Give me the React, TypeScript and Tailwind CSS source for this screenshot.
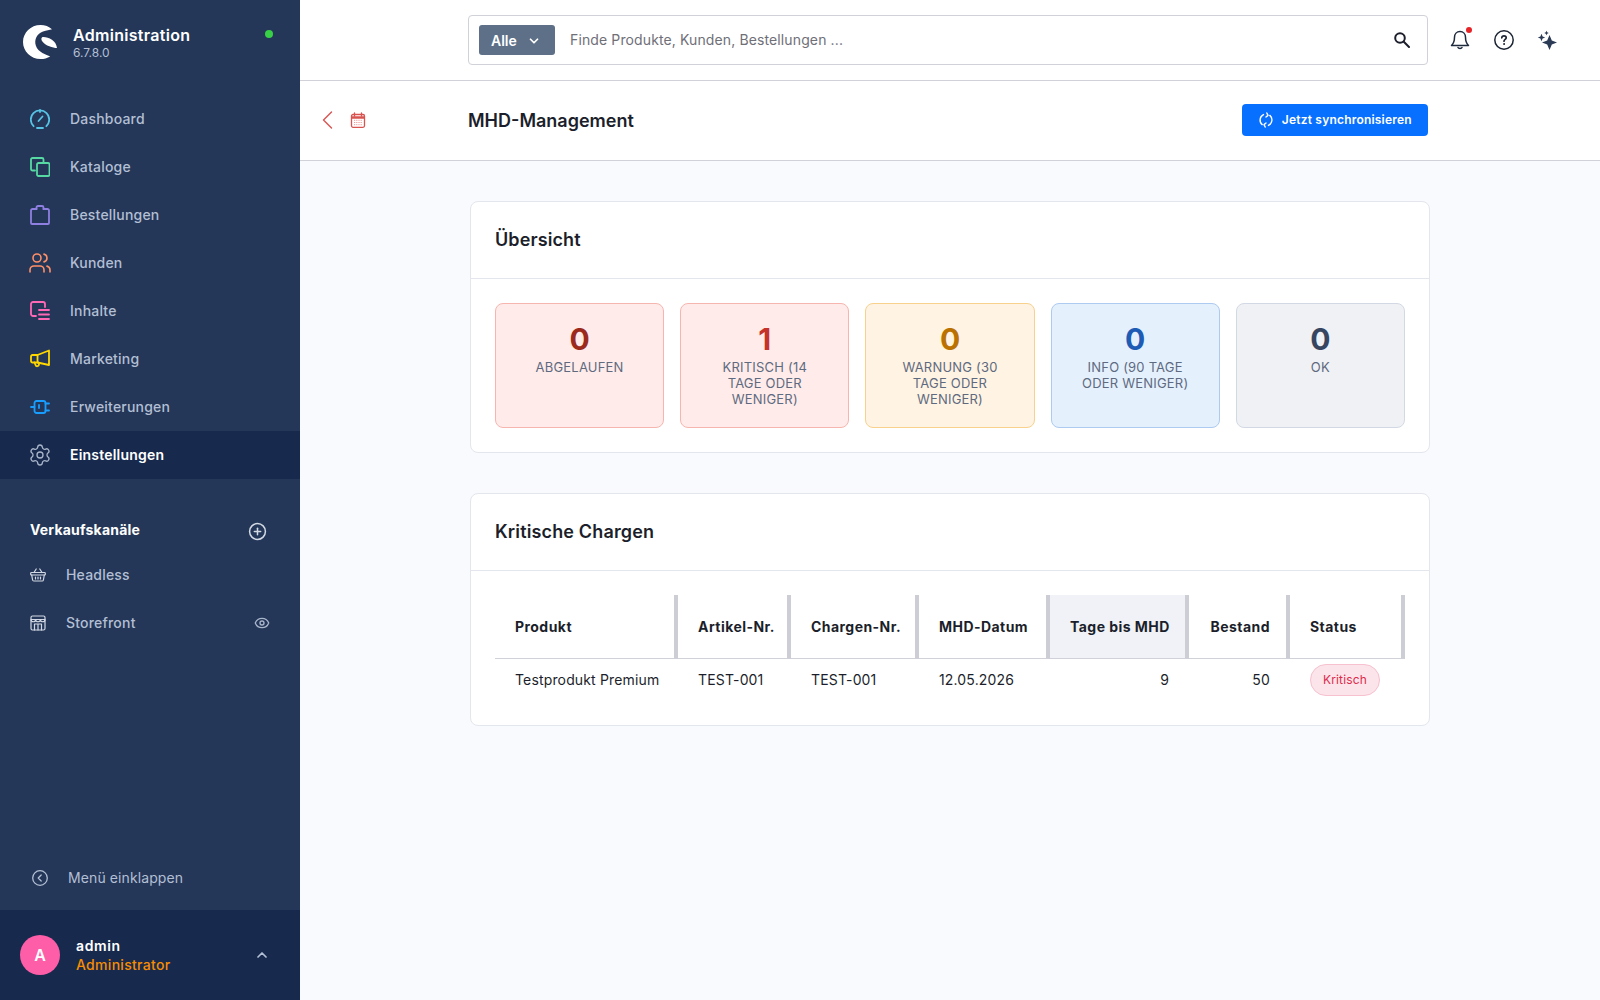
import React from 'react';
import { Settings, ChevronUp, ChevronDown, CirclePlus, Eye, Users } from 'lucide-react';

function Logo() {
  return (
    <svg width="34" height="34" viewBox="0 0 34 34" fill="#fff" className="shrink-0">
      <path d="M29 4.200C26 1.600 22 0 17.500 0 7.800 0 0 7.600 0 17c0 9.400 7.800 17 17.500 17 3.500 0 6.900-1 9.700-2.600C23.500 29.800 15 27.500 12.800 20.500 11 14.500 14 8.500 20 6.500c3.500-1.100 6.500-1.500 9-2.300z" />
      <path d="M19.500 12C25 11.600 33 15 34 23c-4-.1-11.500-2-15-7-1-1.600-.8-3.400.5-4z" />
    </svg>
  );
}

const s = { fill: 'none', strokeWidth: 1.8, strokeLinecap: 'round' as const, strokeLinejoin: 'round' as const };

function IconDashboard() {
  return (
    <svg width="20" height="20" viewBox="0 0 20 20" {...s} stroke="#57c4e5">
      <path d="M3.600 17.200A9.200 9.200 0 1 1 16.400 17.200" />
      <path d="M7 19h6" />
      <path d="M10 1v2M8.500 12l4-4.500" />
    </svg>
  );
}
function IconCatalog() {
  return (
    <svg width="20" height="20" viewBox="0 0 20 20" {...s} stroke="#57d9a3">
      <path d="M5 13.500H2.500A1.500 1.500 0 0 1 1 12V2.500A1.500 1.500 0 0 1 2.500 1H12a1.500 1.500 0 0 1 1.500 1.500V6" />
      <rect x="7" y="6" width="12.500" height="13" rx="1.500" />
    </svg>
  );
}
function IconOrders() {
  return (
    <svg width="20" height="20" viewBox="0 0 20 20" {...s} stroke="#8f7fe0">
      <path d="M6.500 4H2.500A1.500 1.500 0 0 0 1 5.500V18a1 1 0 0 0 1 1h16a1 1 0 0 0 1-1V5.500A1.500 1.500 0 0 0 17.500 4H13.500" />
      <path d="M6.500 4V2.500A1.500 1.500 0 0 1 8 1h4a1.500 1.500 0 0 1 1.500 1.500V4" />
    </svg>
  );
}
function IconContent() {
  return (
    <svg width="20" height="20" viewBox="0 0 20 20" {...s} stroke="#ff68b4">
      <path d="M6 15H3a2 2 0 0 1-2-2V3a2 2 0 0 1 2-2h10a2 2 0 0 1 2 2v3" />
      <path d="M9 9h10M9 13.500h10M9 18h10" />
    </svg>
  );
}
function IconMarketing() {
  return (
    <svg width="20" height="20" viewBox="0 0 20 20" {...s} stroke="#ffd700">
      <path d="M7.500 6 19 1.500v14.500L7.500 13.500H2.500A1.500 1.500 0 0 1 1 12V7.500A1.500 1.500 0 0 1 2.500 6z" />
      <path d="M7.500 6v7.500M4.500 13.500l1 2.500a1.800 1.800 0 0 0 3.500-.5l-.3-1.800" />
    </svg>
  );
}
function IconExtensions() {
  return (
    <svg width="20" height="20" viewBox="0 0 20 20" {...s} stroke="#189eff">
      <path d="M1 10h3.500" />
      <rect x="4.500" y="4" width="11" height="12" rx="2" />
      <path d="M15.500 6.500H19M15.500 13.500H19M9 8v3" />
    </svg>
  );
}
function IconBasket() {
  return (
    <svg width="16" height="14" viewBox="0 0 16 14" fill="none" stroke="#d3d9e4" strokeWidth="1.200" strokeLinecap="round" strokeLinejoin="round">
      <path d="M1.500 4.500h13a.800.800 0 0 1 .800.800v.900a.800.800 0 0 1-.800.800h-13a.800.800 0 0 1-.800-.800v-.900a.800.800 0 0 1 .800-.800z" />
      <path d="M1.700 7l.900 5a1.200 1.200 0 0 0 1.200 1h8.400a1.200 1.200 0 0 0 1.200-1l.900-5" />
      <path d="M4 4.500 6.200 1M12 4.500 9.800 1M5.500 9v2M8 9v2M10.500 9v2" />
    </svg>
  );
}
function IconStore() {
  return (
    <svg width="16" height="16" viewBox="0 0 16 16" fill="none" stroke="#d3d9e4" strokeWidth="1.200" strokeLinecap="round" strokeLinejoin="round">
      <rect x="1" y="1" width="14" height="14" rx="1.500" />
      <path d="M1 4.500h14M1 4.500c0 3 4.600 3 4.600 0 0 3 4.800 3 4.800 0 0 3 4.600 3 4.600 0" />
      <path d="M4.500 15V9h7v6M8 9v6" />
    </svg>
  );
}
function IconCollapse() {
  return (
    <svg width="16" height="16" viewBox="0 0 16 16" fill="none" stroke="#b3bfd4" strokeWidth="1.300" strokeLinecap="round" strokeLinejoin="round">
      <circle cx="8" cy="8" r="7.300" />
      <path d="M9.200 5 6.200 8l3 3" />
    </svg>
  );
}
function IconRefresh() {
  return (
    <svg width="16" height="16" viewBox="0 0 16 16" fill="none" stroke="#fff" strokeWidth="1.400" strokeLinecap="round" strokeLinejoin="round">
      <path d="M5.500 2.600A6 6 0 0 0 4.200 12.600" />
      <path d="M10.500 13.400A6 6 0 0 0 11.800 3.400" />
      <path d="M8.800 1 10 3.400 8 5M7.200 15 6 12.600 8 11" />
    </svg>
  );
}
function IconCalendar() {
  return (
    <svg width="16" height="16" viewBox="0 0 16 16" fill="none">
      <rect x="1.500" y="2.500" width="13" height="12.800" rx="1.500" stroke="#d9534f" strokeWidth="1.300" />
      <path d="M1.500 5.500h13" stroke="#d9534f" strokeWidth="2.500" />
      <path d="M4.500 1v3M11.500 1v3" stroke="#d9534f" strokeWidth="1.300" strokeLinecap="round" />
      <path d="M4 8.300h8M4 10.500h8M4 12.700h8" stroke="#ee9c98" strokeWidth="1" strokeDasharray="1.200 1" />
    </svg>
  );
}
function IconBack() {
  return (
    <svg width="11" height="18" viewBox="0 0 11 18" fill="none" stroke="#d9534f" strokeWidth="1.400" strokeLinecap="round" strokeLinejoin="round">
      <path d="M9.500 1 1.500 9l8 8" />
    </svg>
  );
}
function IconSearch() {
  return (
    <svg width="16" height="16" viewBox="0 0 16 16" fill="none" stroke="#1c1f2b" strokeWidth="2" strokeLinecap="round">
      <circle cx="6" cy="6" r="4.800" />
      <path d="M9.800 9.800 15 15" />
    </svg>
  );
}
function IconBell() {
  return (
    <svg width="20" height="20" viewBox="0 0 20 20" fill="none" stroke="#1f2a3d" strokeWidth="1.500" strokeLinecap="round" strokeLinejoin="round">
      <path d="M10 1.500c-3.300 0-5.500 2.500-5.500 5.800 0 4.700-1 6.300-3 8.200h17c-2-1.900-3-3.500-3-8.200 0-3.300-2.200-5.800-5.500-5.800z" />
      <path d="M8 17.500c.5 1.300 3.500 1.300 4 0" />
    </svg>
  );
}
function IconHelp() {
  return (
    <svg width="20" height="20" viewBox="0 0 20 20" fill="none" stroke="#1c2433" strokeWidth="1.500" strokeLinecap="round" strokeLinejoin="round">
      <circle cx="10" cy="10" r="9.200" />
      <path d="M7.800 7.800C7.900 6.500 8.900 5.800 10 5.800c1.200 0 2.200.8 2.200 2 0 1.500-2.200 1.800-2.200 3.400" strokeWidth="1.700" />
      <circle cx="10" cy="14" r=".5" fill="#1c2433" strokeWidth="1" />
    </svg>
  );
}
function IconSparkles() {
  return (
    <svg width="20" height="20" viewBox="0 0 20 20" fill="#2b3a55">
      <path d="M12.500 5 14.800 10.600 20 12.600 14.800 14.600 12.500 20 10.200 14.600 5 12.600 10.200 10.600z" />
      <path d="M4.500 3.800 5.600 6.400 8.200 7.500 5.600 8.600 4.500 11.200 3.400 8.600 .8 7.500 3.400 6.400z" />
      <path d="M9.500 .8 10.200 2.300 11.700 3 10.200 3.700 9.500 5.200 8.800 3.700 7.300 3 8.800 2.300z" />
    </svg>
  );
}

const nav: { label: string; icon: React.ReactNode; active?: boolean }[] = [
  { label: 'Dashboard', icon: <IconDashboard /> },
  { label: 'Kataloge', icon: <IconCatalog /> },
  { label: 'Bestellungen', icon: <IconOrders /> },
  { label: 'Kunden', icon: <Users size={24} color="#ff9068" strokeWidth={1.600} className="shrink-0" /> },
  { label: 'Inhalte', icon: <IconContent /> },
  { label: 'Marketing', icon: <IconMarketing /> },
  { label: 'Erweiterungen', icon: <IconExtensions /> },
  { label: 'Einstellungen', icon: <Settings size={24} color="#a9b5ca" strokeWidth={1.300} className="shrink-0" />, active: true },
];

const tiles = [
  { n: '0', label: 'Abgelaufen', box: 'bg-[#ffecea] border-[#f7b5af]', num: 'text-[#9b2a1c]' },
  { n: '1', label: 'Kritisch (14 Tage oder weniger)', box: 'bg-[#ffecea] border-[#f7b5af]', num: 'text-[#c5322b]' },
  { n: '0', label: 'Warnung (30 Tage oder weniger)', box: 'bg-[#fff3e3] border-[#f8d18d]', num: 'text-[#bb7100]' },
  { n: '0', label: 'Info (90 Tage oder weniger)', box: 'bg-[#e5f0fd] border-[#adcaf0]', num: 'text-[#1d5bb5]' },
  { n: '0', label: 'OK', box: 'bg-[#f0f1f5] border-[#d3d9e4]', num: 'text-[#374660]' },
];

function Th({ children, w, right, hl }: { children: React.ReactNode; w: string; right?: boolean; hl?: boolean }) {
  return (
    <th className={`${w} ${right ? 'text-right' : 'text-left'} ${hl ? 'bg-[#f0f2f7]' : ''} h-[64px] whitespace-nowrap pl-5 pr-4 border-r-4 border-b border-b-[#d1d1d9] border-r-[#cdced5] text-sm font-bold text-[#1c1f2b] tracking-[0.45px]`}>
      {children}
    </th>
  );
}

export default function App() {
  return (
    <div className="flex h-screen w-full overflow-hidden font-['Inter',sans-serif] bg-[#f9fafd]">
      <aside className="flex w-[300px] shrink-0 flex-col bg-[#243758]">
        <div className="flex h-[95px] shrink-0 items-start pl-[23px] pr-[27px] pt-[25px]">
          <Logo />
          <div className="ml-4 flex flex-col">
            <span className="text-base font-semibold leading-[20px] text-white tracking-[0.3px]">Administration</span>
            <span className="text-xs leading-[16px] text-[#b3bfd4]">6.7.8.0</span>
          </div>
          <span className="ml-auto mt-[5px] h-2 w-2 rounded-full bg-[#37d046]" />
        </div>
        <nav className="flex flex-col">
          {nav.map((n) => (
            <div key={n.label} className={`flex h-12 items-center pl-[30px] ${n.active ? 'bg-[#172a4d]' : ''}`}>
              <span className="flex w-5 items-center justify-center">{n.icon}</span>
              <span className={`ml-5 text-sm tracking-[0.2px] ${n.active ? 'font-semibold text-white' : 'font-medium text-[#b3bfd4]'}`}>{n.label}</span>
            </div>
          ))}
        </nav>
        <div className="mt-[30px] flex h-[42px] items-center justify-between pl-[30px] pr-[33px]">
          <span className="text-sm font-bold text-white tracking-[0.2px]">Verkaufskanäle</span>
          <CirclePlus size={19} color="#d3d9e4" strokeWidth={1.900} className="mt-[2px]" />
        </div>
        <div className="flex h-12 items-center pl-[30px]">
          <IconBasket />
          <span className="ml-[20px] text-sm font-medium tracking-[0.2px] text-[#b3bfd4]">Headless</span>
        </div>
        <div className="flex h-12 items-center pl-[30px] pr-[30px]">
          <IconStore />
          <span className="ml-[20px] text-sm font-medium tracking-[0.2px] text-[#b3bfd4]">Storefront</span>
          <Eye size={16} color="#a9b5ca" strokeWidth={2} className="ml-auto" />
        </div>
        <div className="mt-auto flex h-12 items-center pl-8">
          <IconCollapse />
          <span className="ml-5 text-sm text-[#b3bfd4] tracking-[0.1px]">Menü einklappen</span>
        </div>
        <div className="mt-[8px] flex h-[90px] shrink-0 items-center bg-[#172a4d] pl-5 pr-[30px]">
          <div className="flex h-10 w-10 items-center justify-center rounded-full bg-[#fe5ea8] text-base font-semibold text-white">A</div>
          <div className="ml-4 flex flex-col">
            <span className="text-sm font-semibold leading-[19px] text-white tracking-[0.6px]">admin</span>
            <span className="text-sm font-medium leading-[19px] text-[#f88d00] tracking-[0.3px]">Administrator</span>
          </div>
          <ChevronUp size={16} color="#b3bfd4" strokeWidth={2.600} className="ml-auto" />
        </div>
      </aside>
      <main className="flex min-w-0 flex-1 flex-col">
        <header className="flex h-[81px] shrink-0 items-center border-b border-[#d1d1d9] bg-white pl-[168px]">
          <div className="flex h-[50px] w-[960px] items-center rounded border border-[#d1d1d9] bg-white pl-[10px] pr-[17px]">
            <div className="flex h-[30px] w-[76px] items-center gap-[10px] rounded-[3px] bg-[#5d7088] pl-3 pt-px text-sm font-semibold text-white">
              Alle <ChevronDown size={14} strokeWidth={3} />
            </div>
            <span className="ml-[15px] text-sm tracking-[0.12px] text-[#6f6f78]">Finde Produkte, Kunden, Bestellungen ...</span>
            <span className="ml-auto"><IconSearch /></span>
          </div>
          <div className="ml-[22px] flex items-center gap-[24px]">
            <span className="relative flex w-5 justify-center">
              <IconBell />
              <span className="absolute -right-[2px] -top-[3px] h-[6px] w-[6px] rounded-full bg-[#e52427]" />
            </span>
            <IconHelp />
            <span className="-ml-[1px]"><IconSparkles /></span>
          </div>
        </header>
        <div className="flex h-[80px] shrink-0 items-center border-b border-[#d1d1d9] bg-white pl-[22px]">
          <span className="-mt-[2px]"><IconBack /></span>
          <span className="-mt-[1px] ml-[17px]"><IconCalendar /></span>
          <h1 className="ml-[102px] text-lg font-semibold text-[#1c1f2b]">MHD-Management</h1>
          <button className="ml-[608px] -mt-px flex h-8 w-[186px] items-center gap-2 rounded bg-[#0870ff] pl-4 text-xs font-semibold tracking-[0.2px] text-white">
            <IconRefresh /> Jetzt synchronisieren
          </button>
        </div>
        <div className="ml-[170px] flex w-[960px] flex-col gap-10 pt-10">
          <section className="rounded-lg border border-[#e3e6ec] bg-white">
            <h2 className="flex h-[77px] items-center border-b border-[#e3e6ec] px-6 text-lg font-semibold tracking-[0.1px] text-[#1c1f2b]">Übersicht</h2>
            <div className="grid grid-cols-5 gap-4 p-6">
              {tiles.map((t, i) => (
                <div key={i} className={`h-[125px] rounded-lg border px-6 pt-[17px] text-center ${t.box}`}>
                  <div className={`text-[30px] font-bold leading-[36px] ${t.num}`}>{t.n}</div>
                  <div className="mt-[2px] text-[13px] uppercase leading-4 tracking-[0.2px] text-[#5e6a80]">{t.label}</div>
                </div>
              ))}
            </div>
          </section>
          <section className="rounded-lg border border-[#e3e6ec] bg-white">
            <h2 className="flex h-[77px] items-center border-b border-[#e3e6ec] px-6 text-lg font-semibold tracking-[0.15px] text-[#1c1f2b]">Kritische Chargen</h2>
            <div className="p-6">
              <table className="w-full table-fixed border-separate border-spacing-0">
                <thead>
                  <tr>
                    <Th w="w-[183px]">Produkt</Th>
                    <Th w="w-[113px]">Artikel-Nr.</Th>
                    <Th w="w-[128px]">Chargen-Nr.</Th>
                    <Th w="w-[131px]">MHD-Datum</Th>
                    <Th w="w-[139px]" right hl>Tage bis MHD</Th>
                    <Th w="w-[101px]" right>Bestand</Th>
                    <Th w="w-[115px]">Status</Th>
                  </tr>
                </thead>
                <tbody>
                  <tr className="h-[42px] text-sm text-[#1c1f2b] tracking-[0.15px]">
                    <td className="pl-5">Testprodukt Premium</td>
                    <td className="pl-5">TEST-001</td>
                    <td className="pl-5">TEST-001</td>
                    <td className="pl-5">12.05.2026</td>
                    <td className="pr-5 text-right">9</td>
                    <td className="pr-5 text-right">50</td>
                    <td className="pl-5">
                      <span className="inline-flex h-8 w-[70px] items-center justify-center rounded-full border border-[#f7c1cf] bg-[#fbe5ea] text-xs text-[#de294c]">Kritisch</span>
                    </td>
                  </tr>
                </tbody>
              </table>
            </div>
          </section>
        </div>
      </main>
    </div>
  );
}
